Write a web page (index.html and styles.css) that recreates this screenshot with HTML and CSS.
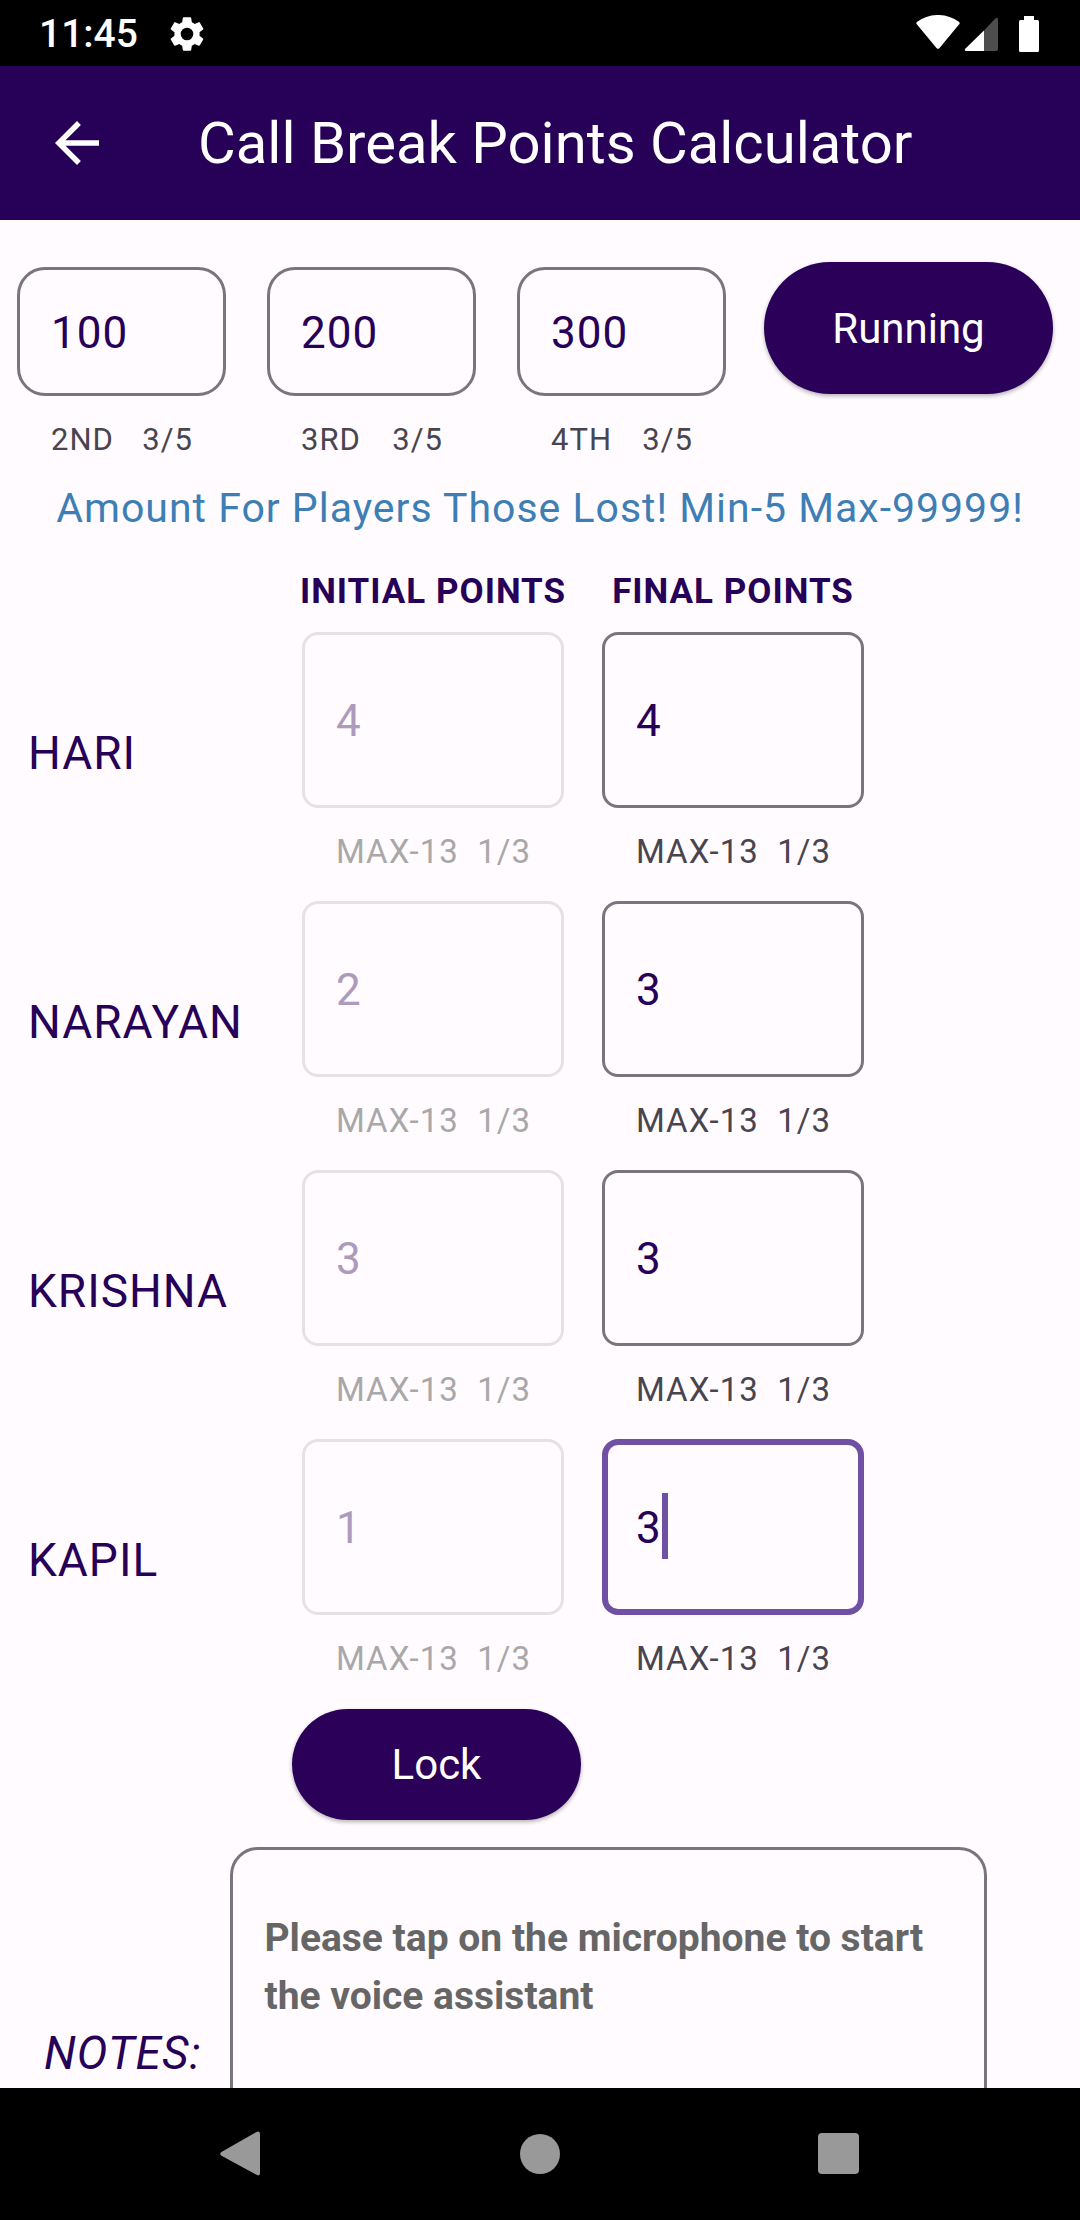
FILE: index.html
```html
<!DOCTYPE html>
<html lang="en">
<head>
<meta charset="utf-8">
<meta name="viewport" content="width=device-width, initial-scale=1">
<title>Call Break Points Calculator</title>
<link rel="stylesheet" href="styles.css">
</head>
<body>
<div class="status-bar">
  <span class="clock">11:45</span>
  <svg class="status-gear" viewBox="0 0 24 24" aria-hidden="true"><path d="M19.14 12.94c.04-.3.06-.61.06-.94 0-.32-.02-.64-.07-.94l2.03-1.58c.18-.14.23-.41.12-.61l-1.92-3.32c-.12-.22-.37-.29-.59-.22l-2.39.96c-.5-.38-1.03-.7-1.62-.94l-.36-2.54c-.04-.24-.24-.41-.48-.41h-3.84c-.24 0-.43.17-.47.41l-.36 2.54c-.59.24-1.13.57-1.62.94l-2.39-.96c-.22-.08-.47 0-.59.22L2.74 8.87c-.12.21-.08.47.12.61l2.03 1.58c-.05.3-.09.63-.09.94s.02.64.07.94l-2.03 1.58c-.18.14-.23.41-.12.61l1.92 3.32c.12.22.37.29.59.22l2.39-.96c.5.38 1.03.7 1.62.94l.36 2.54c.05.24.24.41.48.41h3.84c.24 0 .44-.17.47-.41l.36-2.54c.59-.24 1.13-.56 1.62-.94l2.39.96c.22.08.47 0 .59-.22l1.92-3.32c.12-.22.07-.47-.12-.61l-2.01-1.58zM12 15.6A3.6 3.6 0 1 1 12 8.400a3.6 3.6 0 0 1 0 7.200z"/></svg>
  <svg class="status-icons" viewBox="0 0 124 38" aria-hidden="true">
    <path d="M1 9.500Q-.5 8 1.200 6.800C13-2.300 31-2.300 42.800 6.800Q44.500 8 43 9.500L23.300 33.200Q22 34.500 20.700 33.200Z"/>
    <path opacity=".3" d="M68 15.500L79.300 3.500Q82 1.500 82 4.500V33.500Q82 36 79.500 36H68Z"/>
    <path d="M68 15.500V36H50.500Q47.500 35.500 49.500 33.500Z"/>
    <path d="M108 1h10v4h3.500q1.500 0 1.500 1.500v29q0 1.500-1.500 1.500h-17q-1.500 0-1.500-1.500v-29q0-1.500 1.500-1.500h3.500z"/>
  </svg>
</div>
<header class="app-bar">
  <button class="back" type="button" aria-label="Back"><svg viewBox="0 0 24 24" aria-hidden="true"><path d="M20 11H7.830l5.590-5.590L12 4l-8 8 8 8 1.410-1.410L7.830 13H20v-2z"/></svg></button>
  <h1 class="title">Call Break Points Calculator</h1>
</header>
<main class="content">
  <section class="amounts">
    <div class="amount-fields">
      <div class="field">
        <input class="box box-round" id="second" inputmode="numeric" value="100">
        <label class="helper" for="second"><span>2ND</span><span>3/5</span></label>
      </div>
      <div class="field">
        <input class="box box-round" id="third" inputmode="numeric" value="200">
        <label class="helper" for="third"><span>3RD</span><span>3/5</span></label>
      </div>
      <div class="field">
        <input class="box box-round" id="fourth" inputmode="numeric" value="300">
        <label class="helper" for="fourth"><span>4TH</span><span>3/5</span></label>
      </div>
    </div>
    <button class="pill pill-tall" type="button">Running</button>
  </section>
  <p class="hint">Amount For Players Those Lost! Min-5 Max-99999!</p>
  <section class="scores">
    <div class="score-row score-head">
      <h2 class="heading heading-initial">INITIAL POINTS</h2>
      <h2 class="heading">FINAL POINTS</h2>
    </div>
    <div class="score-row">
      <label class="player" for="hari-final">HARI</label>
      <div class="field">
        <input class="box box-tall" id="hari-initial" value="4" disabled>
        <label class="helper" for="hari-initial"><span>MAX-13</span><span>1/3</span></label>
      </div>
      <div class="field">
        <input class="box box-tall" id="hari-final" inputmode="numeric" value="4">
        <label class="helper" for="hari-final"><span>MAX-13</span><span>1/3</span></label>
      </div>
    </div>
    <div class="score-row">
      <label class="player" for="narayan-final">NARAYAN</label>
      <div class="field">
        <input class="box box-tall" id="narayan-initial" value="2" disabled>
        <label class="helper" for="narayan-initial"><span>MAX-13</span><span>1/3</span></label>
      </div>
      <div class="field">
        <input class="box box-tall" id="narayan-final" inputmode="numeric" value="3">
        <label class="helper" for="narayan-final"><span>MAX-13</span><span>1/3</span></label>
      </div>
    </div>
    <div class="score-row">
      <label class="player" for="krishna-final">KRISHNA</label>
      <div class="field">
        <input class="box box-tall" id="krishna-initial" value="3" disabled>
        <label class="helper" for="krishna-initial"><span>MAX-13</span><span>1/3</span></label>
      </div>
      <div class="field">
        <input class="box box-tall" id="krishna-final" inputmode="numeric" value="3">
        <label class="helper" for="krishna-final"><span>MAX-13</span><span>1/3</span></label>
      </div>
    </div>
    <div class="score-row">
      <label class="player" for="kapil-final">KAPIL</label>
      <div class="field">
        <input class="box box-tall" id="kapil-initial" value="1" disabled>
        <label class="helper" for="kapil-initial"><span>MAX-13</span><span>1/3</span></label>
      </div>
      <div class="field active">
        <input class="box box-tall" id="kapil-final" inputmode="numeric" value="3">
        <span class="caret"></span>
        <label class="helper" for="kapil-final"><span>MAX-13</span><span>1/3</span></label>
      </div>
    </div>
  </section>
  <div class="actions"><button class="pill" type="button">Lock</button></div>
  <section class="notes">
    <label class="notes-label" for="notes">NOTES:</label>
    <textarea class="notes-box" id="notes" placeholder="Please tap on the microphone to start the voice assistant"></textarea>
  </section>
</main>
<nav class="nav-bar">
  <button class="nav-button" type="button" aria-label="Back"><svg viewBox="0 0 48 48" aria-hidden="true"><path d="M4 22.200L40 1.800Q43 .5 43 4V43Q43 46.500 40 45L4 25.500Q2.500 24 4 22.200Z"/></svg></button>
  <button class="nav-button" type="button" aria-label="Home"><svg viewBox="0 0 48 48" aria-hidden="true"><circle cx="24" cy="24" r="20"/></svg></button>
  <button class="nav-button" type="button" aria-label="Recent apps"><svg viewBox="0 0 48 48" aria-hidden="true"><rect x="3" y="3" width="41" height="41" rx="4"/></svg></button>
</nav>
</body>
</html>
```
FILE: styles.css
```css
:root {
  --ink: #270057;
  --surface: #fffbff;
  --outline: #79747e;
  --outline-off: #e6e1e6;
  --accent: #6f50a2;
}

* {
  box-sizing: border-box;
}

body {
  margin: 0;
  height: 100vh;
  display: flex;
  flex-direction: column;
  background: var(--surface);
  color: var(--ink);
  font-family: Roboto, "Liberation Sans", sans-serif;
}

button,
input,
textarea {
  font-family: inherit;
  margin: 0;
}

.status-bar {
  flex: none;
  height: 66px;
  padding: 2px 40px 0 39px;
  display: flex;
  align-items: center;
  background: #000;
  color: #fff;
  fill: #fff;
}

.clock {
  font-size: 39px;
  font-weight: 500;
  line-height: 48px;
}

.status-gear {
  width: 42px;
  height: 42px;
  margin-left: 28px;
}

.status-icons {
  width: 124px;
  height: 38px;
  margin-left: auto;
}

.app-bar {
  flex: none;
  height: 154px;
  padding: 0 44px;
  display: flex;
  align-items: center;
  gap: 88px;
  background: var(--ink);
  color: #fff;
}

.back {
  width: 66px;
  height: 66px;
  padding: 0;
  border: 0;
  background: none;
  fill: #fff;
}

.back svg {
  display: block;
}

.title {
  margin: 0;
  font-size: 58px;
  font-weight: 400;
  line-height: 72px;
}

.content {
  flex: 1;
  min-height: 0;
  overflow-y: auto;
  scrollbar-width: none;
  padding-top: 42px;
}

.amounts {
  display: flex;
  align-items: flex-start;
  gap: 38px;
  padding: 0 27px 0 17px;
}

.amount-fields {
  flex: 1;
  display: grid;
  grid-template-columns: repeat(3, minmax(0, 1fr));
  gap: 41px;
  padding-top: 5px;
}

.field {
  position: relative;
  display: flex;
  flex-direction: column;
  gap: 22px;
}

.box {
  width: 100%;
  height: 129px;
  padding: 2px 31px 0;
  border: 3px solid var(--outline);
  border-radius: 16px;
  outline: 0;
  background: transparent;
  color: var(--ink);
  font-size: 44px;
  letter-spacing: 1px;
}

.box-round {
  border-radius: 28px;
}

.box-tall {
  height: 176px;
}

.box:disabled {
  border-color: var(--outline-off);
  color: #ac9bbd;
}

.helper {
  display: flex;
  justify-content: space-between;
  padding: 0 33px 0 34px;
  color: #49454f;
  font-size: 33px;
  line-height: 44px;
  letter-spacing: 1px;
}

.amounts .helper {
  font-size: 31px;
}

.box:disabled + .helper {
  color: #a9a8a9;
}

.active .box {
  padding: 2px 28px 0;
  border: 6px solid var(--accent);
}

.caret {
  position: absolute;
  left: 60px;
  top: 54px;
  width: 6px;
  height: 66px;
  background: var(--accent);
}

.pill {
  width: 289px;
  height: 111px;
  padding: 0;
  border: 0;
  border-radius: 66px;
  background: #2a0059;
  box-shadow: 0 2px 4px rgba(0, 0, 0, 0.3);
  color: #fff;
  font-size: 42px;
}

.pill-tall {
  height: 132px;
}

.hint {
  margin: 22px 0 40px;
  color: #3d7fb5;
  font-size: 41px;
  line-height: 48px;
  letter-spacing: 1px;
  text-align: center;
}

.scores {
  display: flex;
  flex-direction: column;
  gap: 27px;
  padding: 0 216px 0 28px;
}

.score-row {
  display: grid;
  grid-template-columns: minmax(0, 1fr) 262px 262px;
  column-gap: 38px;
  align-items: center;
}

.score-head {
  margin-bottom: -7px;
}

.heading {
  margin: 0 -8px;
  font-size: 35px;
  font-weight: 700;
  line-height: 40px;
  letter-spacing: 1px;
  text-align: center;
  white-space: nowrap;
}

.heading-initial {
  grid-column: 2;
}

.player {
  font-size: 46px;
  line-height: 56px;
  letter-spacing: 1px;
}

.actions {
  padding: 28px 0 27px 292px;
}

.actions .pill {
  display: block;
}

.notes {
  display: flex;
  align-items: center;
  gap: 29px;
  padding: 0 93px 40px 44px;
}

.notes-label {
  font-size: 46px;
  font-style: italic;
  line-height: 56px;
  letter-spacing: 1px;
}

.notes-box {
  flex: 1;
  height: 412px;
  padding: 59px 31px;
  border: 3px solid var(--outline);
  border-radius: 28px;
  outline: 0;
  background: transparent;
  color: var(--ink);
  font-size: 39px;
  font-weight: 700;
  line-height: 58px;
  resize: none;
}

.notes-box::placeholder {
  color: #666;
  opacity: 1;
}

.nav-bar {
  flex: none;
  height: 132px;
  padding: 0 92px;
  display: grid;
  grid-template-columns: repeat(3, 1fr);
  align-items: center;
  justify-items: center;
  background: #000;
}

.nav-button {
  width: 48px;
  height: 48px;
  padding: 0;
  border: 0;
  background: none;
  fill: #999;
}

.nav-button svg {
  display: block;
}
```
